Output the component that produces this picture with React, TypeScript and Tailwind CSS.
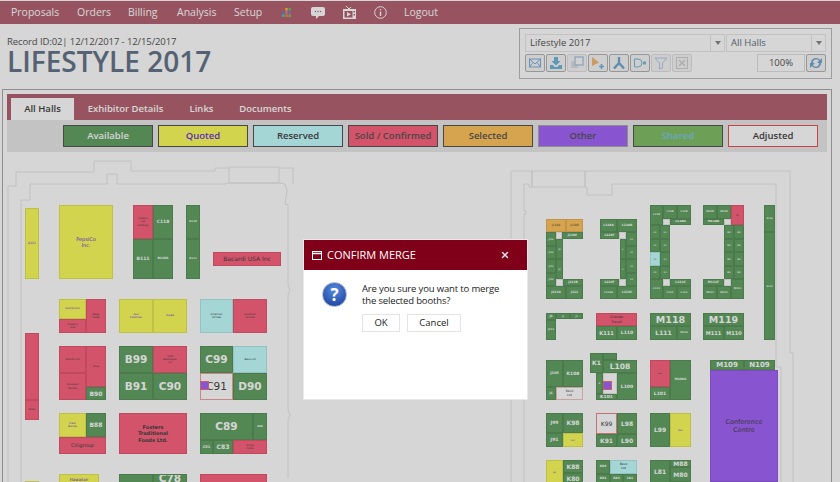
import React from "react";
import { X } from "lucide-react";

type Booth = [number, number, number, number, string, string?, number?];

const G = "bg-[#64a266] text-white font-bold";
const Y = "bg-[#fcfd5d] text-[#6a30e0]";
const R = "bg-[#fc637f] text-[#444]";
const T = "bg-[#c4ffff] text-[#333]";
const O = "bg-[#ffc45f] text-[#444]";
const P = "bg-[#a265f8] text-[#444]";
const W = "bg-[#ffffff] text-[#444]";
const E = "bg-[#ffffff]";

// x, y, w, h are page coordinates; the map subtracts its own origin
const booths: Booth[] = [
  // left hall
  [25, 208, 14, 71, Y, "A121", 3],
  [59, 205, 54, 74, Y, "PepsiCo\nInc.", 5],
  [133, 205, 20, 34, R, "Hudson\nLtd\nHoldings", 2.5],
  [153, 205, 20, 34, G, "C118", 4.5],
  [133, 239, 20, 40, G, "B111", 4.5],
  [153, 239, 20, 40, G, "B110A", 3],
  [186, 205, 14, 34, G, "D118", 2.5],
  [186, 239, 14, 40, G, "D111", 2.5],
  [213, 252, 68, 14, R, "Bacardi USA Inc", 6],
  [59, 299, 27, 20, Y, "Distribution", 2.5],
  [59, 319, 27, 14, R, "Property\nOne", 2.5],
  [86, 299, 20, 34, R, "Mega\nFoods", 2.5],
  [119, 299, 34, 34, Y, "Asia\nFoodlines", 2.5],
  [153, 299, 34, 34, Y, "Naked", 2.5],
  [200, 299, 33, 34, T, "American\nAirlines", 2.5],
  [233, 299, 34, 34, R, "American\nAirlines", 2.5],
  [25, 333, 14, 67, R, "", 3],
  [25, 400, 14, 20, R, "Rolex", 2.5],
  [59, 346, 27, 27, R, "Brands Ltd", 2.5],
  [59, 373, 27, 27, R, "Universal\nBrands", 2.5],
  [86, 346, 20, 41, R, "Atlas", 2.5],
  [86, 387, 20, 13, G, "B90", 6],
  [119, 346, 34, 27, G, "B99", 10.5],
  [153, 346, 34, 27, R, "Gold\nBeverages\nInc", 2.5],
  [119, 373, 34, 27, G, "B91", 10.5],
  [153, 373, 34, 27, G, "C90", 10.5],
  [200, 346, 33, 27, G, "C99", 10.5],
  [233, 346, 34, 27, T, "Bevo Ltd", 2.5],
  [200, 373, 33, 27, `${W} border border-[#f4a0a0]`, "C91", 10.5],
  [233, 373, 34, 27, G, "D90", 10.5],
  [59, 413, 27, 24, Y, "Fresh\nBrands", 2.5],
  [86, 413, 20, 24, G, "B88", 6],
  [59, 437, 47, 17, R, "Citigroup", 5],
  [119, 413, 68, 41, `${R} font-bold`, "Fosters\nTraditional\nFoods Ltd.", 5],
  [200, 413, 53, 27, G, "C89", 10.5],
  [253, 413, 14, 27, G, "D88", 2.5],
  [200, 440, 13, 14, G, "C81", 3.5],
  [213, 440, 20, 14, G, "C83", 6],
  [233, 440, 34, 14, R, "Prime\nFoods", 2.5],
  [25, 481, 14, 3, Y],
  [59, 474, 40, 10, Y, "Hawaiian", 4],
  [119, 474, 34, 10, G],
  [153, 474, 34, 9, G, "C78", 10.5],
  [200, 474, 67, 10, R],

  // block J/K
  [546, 219, 20, 13, O, "J118A", 3],
  [566, 219, 17, 13, O, "J118B", 3],
  [562, 232, 21, 7, G, "J118C", 3],
  [556, 232, 6, 7, E],
  [546, 232, 10, 14, G, "J116", 2],
  [546, 246, 10, 13, G, "J114", 2],
  [546, 259, 10, 14, G, "J112", 2],
  [546, 273, 10, 13, G, "J110", 2],
  [556, 239, 7, 20, G, "J1", 2],
  [556, 259, 7, 20, G, "J1", 2],
  [556, 279, 7, 7, E],
  [563, 279, 20, 7, G, "J111B", 3],
  [546, 286, 20, 13, G, "J111A", 3],
  [566, 286, 17, 13, G, "J111", 3],

  // block L
  [600, 219, 17, 13, G, "L118A", 3],
  [617, 219, 20, 13, G, "L118B", 3],
  [600, 232, 19, 7, G, "L118F", 3],
  [619, 232, 7, 7, E],
  [626, 232, 11, 14, G, "L1", 2],
  [626, 246, 11, 13, G, "L1", 2],
  [626, 259, 11, 14, G, "L1", 2],
  [626, 273, 11, 13, G, "L1", 2],
  [620, 239, 6, 20, G, "L", 2],
  [620, 259, 6, 20, G, "L", 2],
  [600, 279, 19, 7, G, "L110F", 3],
  [619, 279, 7, 7, E],
  [600, 286, 17, 13, G, "L110A", 2.5],
  [617, 286, 20, 13, G, "L110C", 3],

  // block L/M
  [650, 205, 13, 20, G, "L118", 2.5],
  [663, 205, 14, 14, G, "L118", 2.5],
  [677, 205, 14, 14, G, "L118", 2.5],
  [663, 219, 7, 6, E],
  [670, 219, 21, 6, G, "L118D", 3],
  [650, 225, 10, 14, G, "L1", 2],
  [660, 225, 10, 14, G, "L1", 2],
  [650, 239, 10, 13, G, "L1", 2],
  [660, 239, 10, 13, G, "L1", 2],
  [650, 252, 10, 14, T, "L1", 2],
  [660, 252, 10, 14, G, "L1", 2],
  [650, 266, 10, 13, G, "L1", 2],
  [660, 266, 10, 13, G, "L1", 2],
  [650, 279, 13, 20, G, "L111", 2.5],
  [663, 279, 7, 7, E],
  [670, 279, 21, 7, G, "L111C", 3],
  [663, 286, 14, 13, G, "L111", 2.5],
  [677, 286, 14, 13, G, "L111", 2.5],

  // block M
  [703, 205, 14, 14, G, "M118", 2.5],
  [717, 205, 14, 14, G, "M118", 2.5],
  [731, 205, 13, 20, R, "M1", 2],
  [703, 219, 21, 6, G, "M118D", 3],
  [724, 219, 7, 6, E],
  [724, 225, 10, 14, G, "M1", 2],
  [734, 225, 10, 14, G, "M1", 2],
  [724, 239, 10, 13, G, "M1", 2],
  [734, 239, 10, 13, G, "M1", 2],
  [724, 252, 10, 14, G, "M1", 2],
  [734, 252, 10, 14, G, "M1", 2],
  [724, 266, 10, 13, G, "M1", 2],
  [734, 266, 10, 13, G, "M1", 2],
  [703, 279, 21, 7, G, "M111F", 3],
  [724, 279, 7, 7, E],
  [731, 279, 13, 20, G, "M111", 2.5],
  [703, 286, 14, 13, G, "M111", 2.5],
  [717, 286, 14, 13, G, "M111", 2.5],

  // right strip
  [764, 205, 11, 27, G, "N118", 2],
  [764, 232, 11, 108, G, "N110", 2],

  // second row
  [546, 313, 10, 7, G, "J1", 3],
  [556, 313, 14, 6, G, "J1", 2],
  [570, 313, 13, 6, G, "J1", 2],
  [546, 320, 10, 20, G, "J111", 2.5],
  [596, 313, 41, 13, R, "Grande\nTravel", 3.5],
  [596, 326, 21, 14, G, "K111", 5],
  [617, 326, 20, 14, G, "L110", 4.5],
  [650, 313, 41, 13, G, "M118", 9.5],
  [650, 326, 27, 14, G, "L111", 6],
  [677, 326, 14, 14, G, "M110", 2.5],
  [703, 313, 41, 13, G, "M119", 9.5],
  [703, 326, 21, 14, G, "M111", 5],
  [724, 326, 20, 14, G, "M110", 5],

  // third row
  [546, 360, 17, 27, G, "J108", 3.5],
  [563, 360, 20, 27, G, "K108", 4.5],
  [546, 387, 10, 13, G, "J1", 3],
  [556, 387, 27, 13, `${W} border border-[#f4c0c0]`, "Bevo\nLtd", 3],
  [603, 360, 34, 13, G, "L108", 7.5],
  [590, 353, 13, 20, G, "K1", 6],
  [603, 353, 14, 7, G],
  [596, 373, 7, 21, G, "K", 2],
  [603, 373, 14, 21, E],
  [596, 394, 21, 6, G, "K101", 4.5],
  [617, 373, 20, 27, G, "L100", 4.5],
  [650, 360, 20, 27, R, "Inter", 2],
  [650, 387, 20, 13, G, "L101", 4.5],
  [670, 360, 21, 40, G, "M100A", 3],
  [710, 360, 34, 10, G, "M109", 7],
  [744, 360, 31, 10, G, "N109", 7],
  [710, 370, 68, 112, P, "Conference\nCentre", 6.5],

  // fourth row
  [546, 413, 17, 20, G, "J99", 4.5],
  [563, 413, 20, 20, G, "K98", 6],
  [546, 433, 17, 14, G, "J91", 4.5],
  [563, 433, 20, 14, Y, "K90", 2],
  [596, 413, 21, 21, `${W} border border-[#e88]`, "K99", 6],
  [617, 413, 20, 21, G, "L98", 6],
  [596, 434, 21, 13, G, "K91", 6],
  [617, 434, 20, 13, G, "L90", 6],
  [650, 413, 20, 34, G, "L99", 6],
  [670, 413, 21, 34, Y, "M90", 2],

  // fifth row
  [546, 460, 17, 24, Y, "J81", 2],
  [563, 460, 20, 13, G, "K88", 6],
  [563, 473, 20, 11, G, "K80", 6],
  [596, 460, 14, 14, G, "K89", 3],
  [610, 460, 27, 14, T, "Bevo\nLtd", 3],
  [596, 474, 14, 10, G, "K81", 3],
  [610, 474, 13, 10, G, "K83", 3],
  [623, 474, 14, 10, G, "L81", 3],
  [650, 460, 20, 24, G, "L81", 6],
  [670, 460, 21, 7, G, "M88", 6],
  [670, 467, 21, 15, G, "M80", 6],
];

const legend = [
  ["Available", "bg-[#64a266] border-[#555] text-white"],
  ["Quoted", "bg-[#fcfd5d] border-[#555] text-[#6a30e0]"],
  ["Reserved", "bg-[#c4ffff] border-[#555] text-[#444]"],
  ["Sold / Confirmed", "bg-[#fc637f] border-[#555] text-[#555]"],
  ["Selected", "bg-[#ffc45f] border-[#555] text-[#555]"],
  ["Other", "bg-[#a265f8] border-[#aaa] text-[#555]"],
  ["Shared", "bg-[#83be67] border-[#555] text-[#7ec8e8]"],
  ["Adjusted", "bg-white border-[#f05050] text-[#444]"],
];

const ToolButton = ({ off, children }: { off?: boolean; children: React.ReactNode }) => (
  <div className={`flex h-[18px] w-[20px] items-center justify-center rounded-[2px] border ${off ? "border-[#e0e0e0]" : "border-[#b4b4b4]"} bg-[#f6f6f6]`}>
    <svg viewBox="0 0 14 14" className={`h-[14px] w-[14px] ${off ? "opacity-40" : "opacity-70"}`}>{children}</svg>
  </div>
);

const Floor = () => (
  <svg viewBox="3 152 830 330" className="absolute left-0 top-0 h-[330px] w-[830px]" fill="none" stroke="#e6e6e6" strokeWidth="1">
    <path d="M8 186H16V172H94V161H131V171H215V168H229M229 167H279V183H229V167M279 168H293V184" />
    <path d="M21 482V200H30V184H107V174H117V184H226V183H280L285 184L287 191L285 204L288 205V285L290 290L288 295V410L290 415L288 420V478" />
    <path d="M8 186V482" />
    <path d="M511 482V171H790V353H793V482" />
    <path d="M524 482V214H526V211H524V184H529V187H587V195H612V184H776V367H781V482" />
    <path d="M532 171V187M585 171V187" strokeWidth="1.5" />
  </svg>
);

export default function App() {
  return (
    <div className="relative h-[482px] w-[840px] overflow-hidden bg-white font-['Open_Sans',sans-serif]">
      {/* top menu */}
      <nav className="mt-px flex h-[23px] items-center bg-[#b46372] pl-[11px] text-[10.5px] text-white">
        <span className="w-[66px]">Proposals</span>
        <span className="w-[51px]">Orders</span>
        <span className="w-[49px]">Billing</span>
        <span className="w-[57px]">Analysis</span>
        <span className="w-[48px]">Setup</span>
        <svg viewBox="0 0 9 9" className="mr-[20px] h-[9px] w-[9px]">
          {["#e05a5a", "#e0c050", "#60c060", "#5090d0", "#e080a0", "#a070d0", "#50c0c0", "#e09040", "#80c050"].map((c, i) => (
            <rect key={i} x={(i % 3) * 3.2} y={Math.floor(i / 3) * 3.2} width="2.6" height="2.6" fill={c} />
          ))}
        </svg>
        <svg viewBox="0 0 14 12" className="mr-[18px] h-[12px] w-[14px]" fill="white">
          <path d="M2 0H12A2 2 0 0 1 14 2V7A2 2 0 0 1 12 9H8L5 12V9H2A2 2 0 0 1 0 7V2A2 2 0 0 1 2 0Z" />
          <circle cx="4.5" cy="4.5" r=".7" fill="#b46372" />
          <circle cx="7" cy="4.5" r=".7" fill="#b46372" />
          <circle cx="9.5" cy="4.5" r=".7" fill="#b46372" />
        </svg>
        <svg viewBox="0 0 13 13" className="mr-[18px] h-[13px] w-[13px]" fill="white">
          <path d="M3 0L6 3L8 1" fill="none" stroke="white" />
          <path fillRule="evenodd" d="M0 3H13V13H0ZM1.5 5V11.5H9.5V5ZM10.5 5V6.5H12V5ZM10.5 8V9.5H12V8Z" />
          <path d="M4 6L8 8.2L4 10.5Z" />
        </svg>
        <svg viewBox="0 0 13 13" className="mr-[17px] h-[13px] w-[13px]" fill="none" stroke="white">
          <circle cx="6.5" cy="6.5" r="5.8" />
          <path d="M6.5 5.5V10M6.5 3V4.3" strokeWidth="1.4" />
        </svg>
        <span>Logout</span>
      </nav>

      {/* title and filters */}
      <header className="flex h-[65px] justify-between pl-[7px]">
        <div className="pt-[12px] text-[#555]">
          <div className="text-[9.5px] leading-[12px] tracking-[-0.1px]">Record ID:02| 12/12/2017 - 12/15/2017</div>
          <h1 className="text-[28px] font-semibold leading-[26px] text-[#66758a]">LIFESTYLE 2017</h1>
        </div>
        <div className="mr-[8px] mt-[4px] h-[51px] w-[313px] border border-[#bbb] px-[5px] pt-[5px]">
          <div className="flex gap-[1px] text-[9.5px] text-[#555]">
            <div className="flex h-[18px] w-[200px] items-center justify-between border border-[#e8e8e8] pl-[4px]">
              Lifestyle 2017
              <span className="flex h-full w-[14px] items-center justify-center border-l border-[#e8e8e8]">
                <span className="border-x-[3px] border-t-[4px] border-x-transparent border-t-[#888]" />
              </span>
            </div>
            <div className="flex h-[18px] w-[100px] items-center justify-between border border-[#e8e8e8] pl-[4px] text-[#5a7080]">
              All Halls
              <span className="flex h-full w-[14px] items-center justify-center border-l border-[#e8e8e8]">
                <span className="border-x-[3px] border-t-[4px] border-x-transparent border-t-[#888]" />
              </span>
            </div>
          </div>
          <div className="mt-[2px] flex gap-[1px]">
            <ToolButton>
              <rect x="1.5" y="3" width="11" height="8" fill="none" stroke="#4a90d0" />
              <path d="M1.5 3L7 8L12.5 3M1.5 11L5 6.5M12.5 11L9 6.5" fill="none" stroke="#4a90d0" />
            </ToolButton>
            <ToolButton>
              <path d="M5 1H9V5H11.5L7 9.5L2.5 5H5Z" fill="#3a9ad0" />
              <path d="M1 9H4L5.5 11H8.5L10 9H13V13H1Z" fill="#3a9ad0" />
            </ToolButton>
            <ToolButton off>
              <rect x="1" y="5" width="7" height="7" fill="#bbb" />
              <rect x="5" y="1" width="8" height="8" fill="white" stroke="#4a90d0" strokeWidth="1.5" />
            </ToolButton>
            <ToolButton>
              <path d="M1 1L8 6.5L1 10Z" fill="#f0a040" />
              <path d="M8 10.5H13M10.5 8V13" stroke="#3a9ad0" strokeWidth="1.6" />
            </ToolButton>
            <ToolButton>
              <path d="M7 1V7M7 7L2 12.5M7 7L12 12.5" stroke="#3a88c0" strokeWidth="2.4" fill="none" />
            </ToolButton>
            <ToolButton>
              <path d="M1.5 3H5A4 4 0 0 1 5 11H1.5Z" fill="none" stroke="#4aa0c8" />
              <rect x="10" y="5.5" width="3" height="3" fill="#4aa0c8" />
            </ToolButton>
            <ToolButton off>
              <path d="M1 2H13L8.5 7V12L5.5 13V7Z" fill="none" stroke="#4a90d0" />
            </ToolButton>
            <ToolButton off>
              <rect x="1.5" y="1.5" width="11" height="11" fill="none" stroke="#999" />
              <path d="M4 4L10 10M10 4L4 10" stroke="#999" strokeWidth="1.5" />
            </ToolButton>
            <div className="ml-auto flex gap-[1px]">
              <div className="flex h-[18px] w-[48px] items-center justify-center border border-[#e0e0e0] text-[9.5px] text-[#555]">100%</div>
              <ToolButton>
                <path d="M2 7A5 5 0 0 1 11 4L13 2V7H8L10 5A3.2 3.2 0 0 0 4 7Z" fill="#3a88c0" />
                <path d="M12 7A5 5 0 0 1 3 10L1 12V7H6L4 9A3.2 3.2 0 0 0 10 7Z" fill="#3a88c0" />
              </ToolButton>
            </div>
          </div>
        </div>
      </header>

      {/* main panel */}
      <main className="ml-[2px] h-[393px] w-[830px] border border-b-0 border-[#aaa] pt-[4px]">
        <div className="mx-[4px] flex h-[26px] items-end bg-[#b46372] pl-[4px] text-[9.5px] font-semibold text-white">
          <div className="flex h-[22px] w-[63px] items-center justify-center bg-white text-[#444]">All Halls</div>
          <div className="flex h-[22px] w-[103px] items-center justify-center">Exhibitor Details</div>
          <div className="flex h-[22px] w-[49px] items-center justify-center">Links</div>
          <div className="flex h-[22px] w-[79px] items-center justify-center">Documents</div>
        </div>
        <div className="mx-[4px] flex h-[32px] gap-[5px] bg-[#e9e9e9] pl-[56px] pt-[5px]">
          {legend.map(([name, cls]) => (
            <div key={name} className={`flex h-[22px] w-[90px] items-center justify-center border text-[9.5px] font-semibold ${cls}`}>{name}</div>
          ))}
        </div>

        {/* floor plan */}
        <div className="relative h-[330px] w-[828px] font-['DejaVu_Sans',sans-serif]">
          <Floor />
          {booths.map(([x, y, w, h, cls, label, size], i) => (
            <div
              key={i}
              className={`absolute flex items-center justify-center overflow-hidden whitespace-pre-line border-[0.5px] border-[#00000018] text-center leading-[1.25] ${cls}`}
              style={{ left: x - 3, top: y - 152, width: w, height: h, fontSize: size }}
            >
              {label}
            </div>
          ))}
          {/* selected markers */}
          <div className="absolute left-[197px] top-[229px] h-[9px] w-[9px] border border-[#f07080] bg-[#a265f8]" />
          <div className="absolute left-[600px] top-[229px] h-[9px] w-[9px] border border-[#f07080] bg-[#a265f8]" />
        </div>
      </main>

      {/* dim layer */}
      <div className="absolute inset-0 bg-black/[.16]" />

      {/* confirm dialog */}
      <div className="absolute left-[304px] top-[240px] h-[159px] w-[223px] bg-white text-[#222] outline outline-1 outline-[#e8e8e8]">
        <div className="flex h-[30px] items-center bg-[#7f0018] pl-[8px] pr-[17px] text-white">
          <svg viewBox="0 0 10 9" className="mr-[5px] h-[9px] w-[10px]" fill="none" stroke="white">
            <rect x=".5" y=".5" width="9" height="8" />
            <path d="M0 2.5H10" strokeWidth="1.5" />
          </svg>
          <span className="text-[11px]">CONFIRM MERGE</span>
          <X size={10} strokeWidth={3.5} className="ml-auto text-[#dde4ee]" />
        </div>
        <div className="flex pl-[18px] pt-[12px]">
          <div className="flex h-[25px] w-[25px] items-center justify-center rounded-full border-[1.5px] border-[#aab4c8] bg-[radial-gradient(circle_at_50%_30%,#5a8ae0,#123a98)] text-[17px] font-bold text-white">?</div>
          <div className="ml-[15px] mt-[1px]">
            <p className="text-[9.5px] leading-[12px] tracking-[-0.15px]">Are you sure you want to merge<br />the selected booths?</p>
            <div className="mt-[7px] flex gap-[7px] text-[9.5px]">
              <div className="flex h-[18px] w-[38px] items-center justify-center border border-[#e4e4e4]">OK</div>
              <div className="flex h-[18px] w-[54px] items-center justify-center border border-[#e4e4e4]">Cancel</div>
            </div>
          </div>
        </div>
      </div>
    </div>
  );
}
